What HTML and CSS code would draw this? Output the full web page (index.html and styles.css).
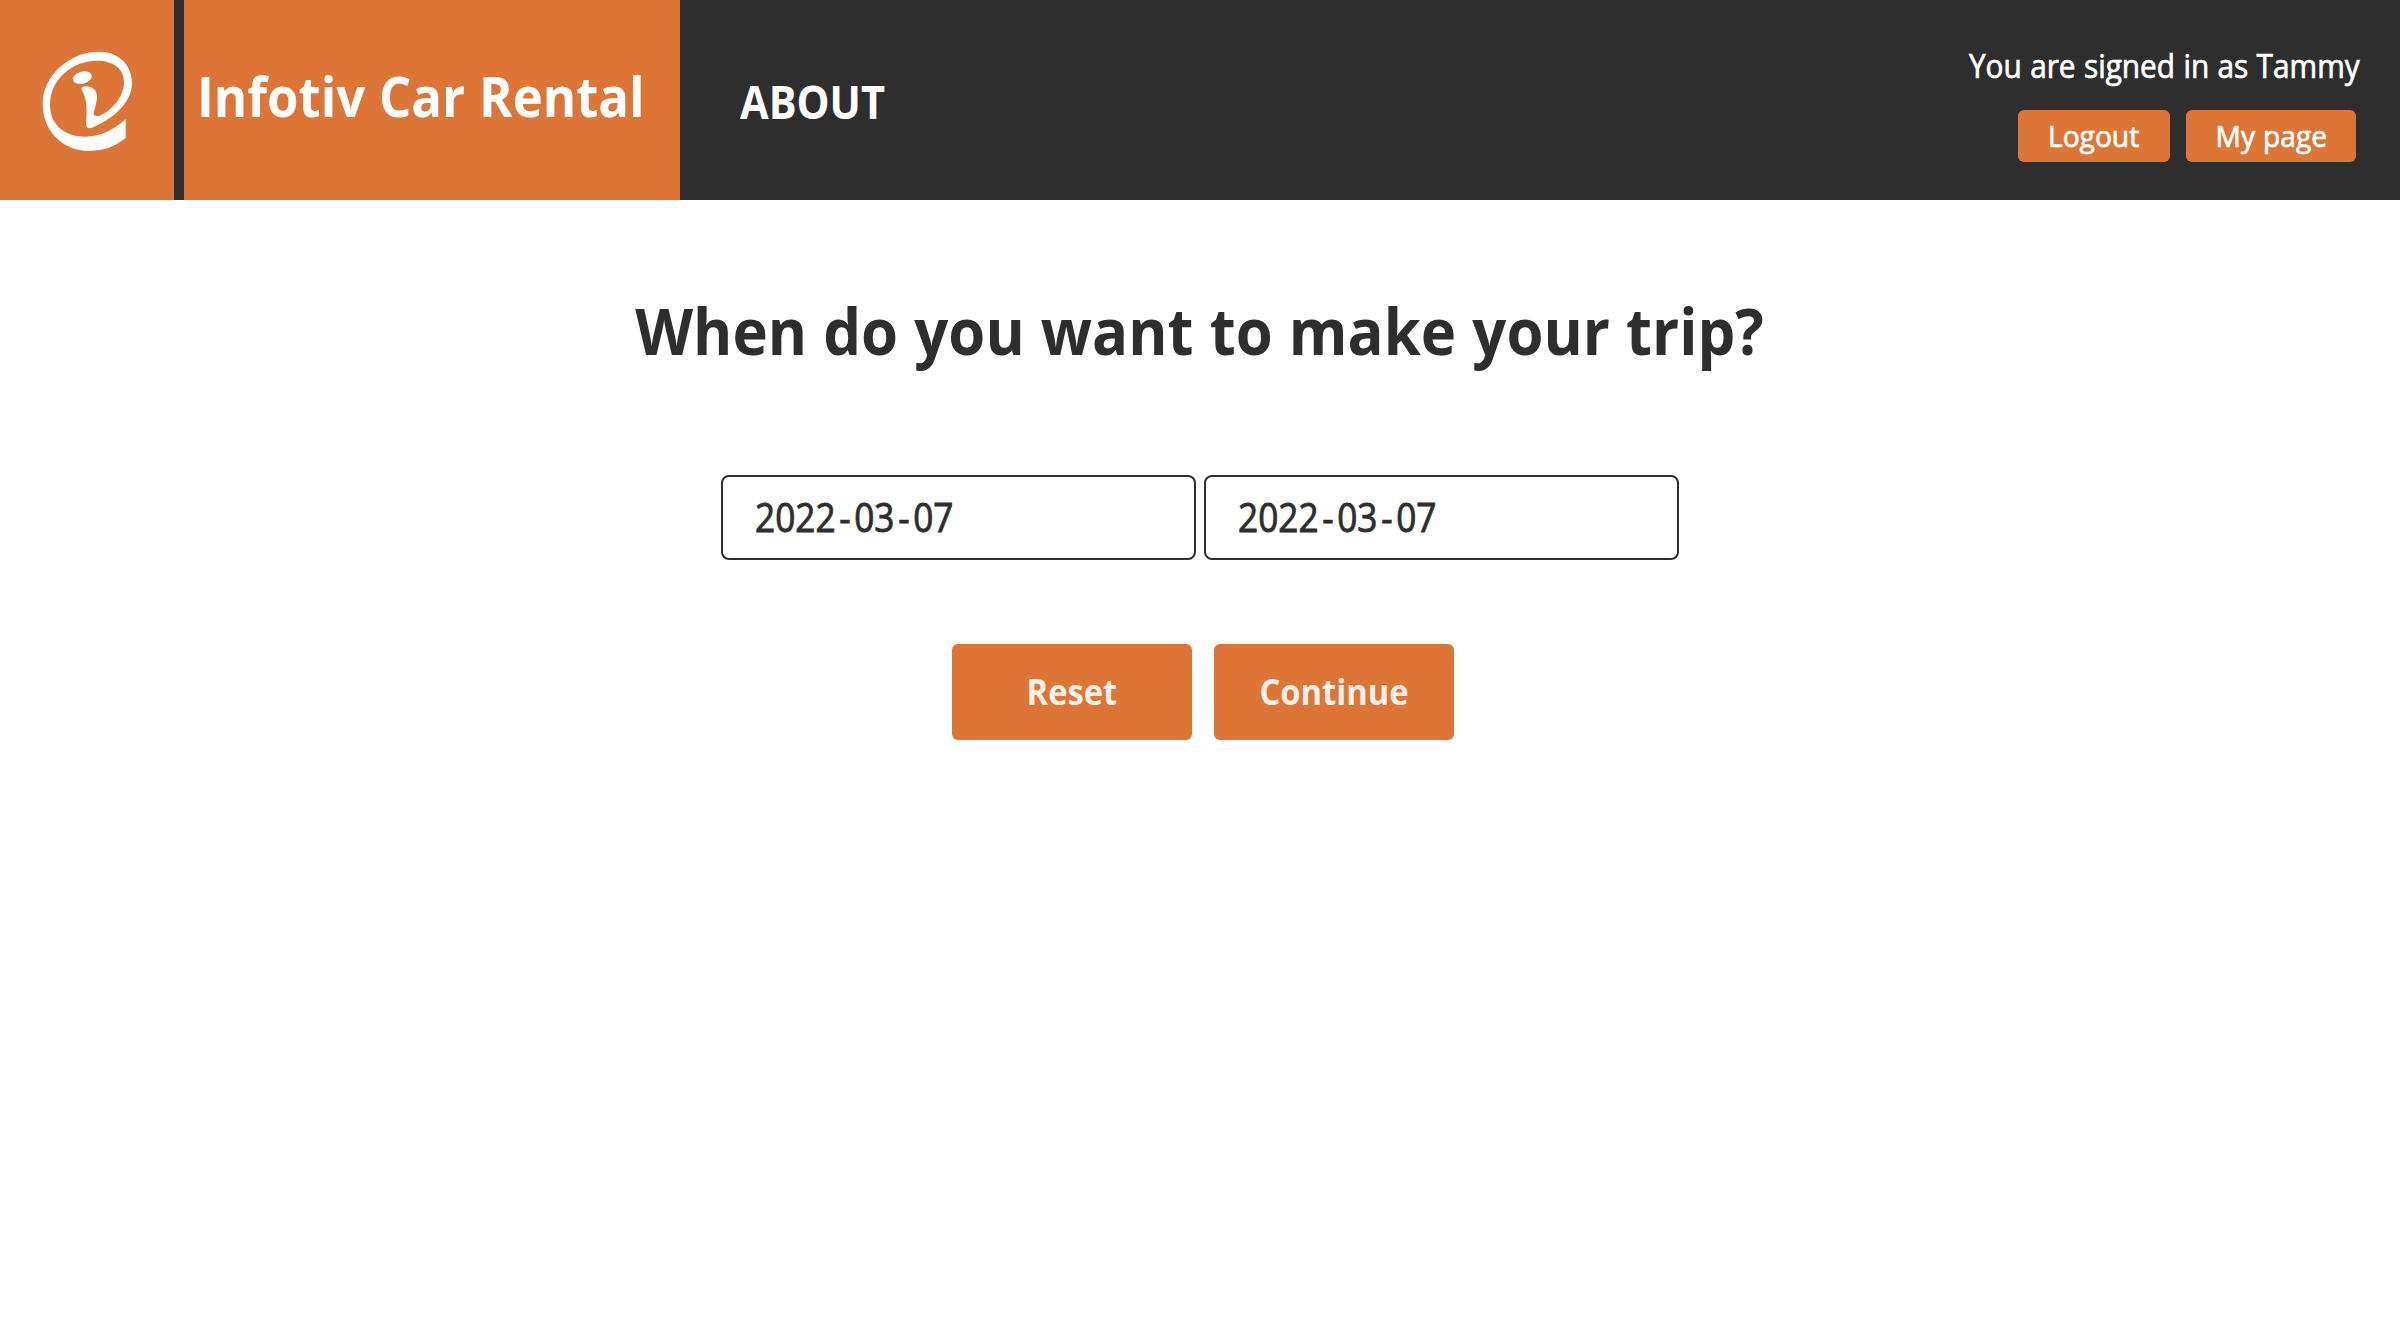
FILE: index.html
```html
<!DOCTYPE html>
<html lang="en">
<head>
<meta charset="utf-8">
<title>Infotiv Car Rental</title>
<link rel="stylesheet" href="styles.css">
</head>
<body>
<header class="header">
  <a class="logo" aria-label="Infotiv">
    <svg class="logo-mark" viewBox="0 0 522 600" fill="#fff">
      <path d="M377 357V414Q330 453 268 453C185 453 128 390 128 312C128 225 210 155 297 155C357 155 396 195 396 250C396 310 335 360 274 384C263 386 258 382 258 372C262 330 260 290 245 270Q243 259 256 259C280 259 291 272 291 292C289 315 282 330 281 345Q290 350 300 347C335 330 372 290 372 248C372 205 340 182 290 182C215 182 150 240 150 315C150 375 195 410 255 410C300 410 340 390 377 357Z"/>
      <ellipse cx="247" cy="233" rx="29" ry="18" transform="rotate(-15 247 233)"/>
    </svg>
  </a>
  <h1 class="title"><span class="label">Infotiv Car Rental</span></h1>
  <nav class="nav"><a class="about"><span class="label">ABOUT</span></a></nav>
  <div class="account">
    <p class="welcome"><span class="label">You are signed in as Tammy</span></p>
    <div class="account-actions">
      <button class="small-button logout"><span class="label">Logout</span></button>
      <button class="small-button my-page"><span class="label">My page</span></button>
    </div>
  </div>
</header>
<main class="main">
  <h2 class="question"><span class="label">When do you want to make your trip?</span></h2>
  <div class="dates">
    <div class="date"><span class="label">2022<i class="dash">-</i>03<i class="dash">-</i>07</span></div>
    <div class="date"><span class="label">2022<i class="dash">-</i>03<i class="dash">-</i>07</span></div>
  </div>
  <div class="actions">
    <button class="button reset"><span class="label">Reset</span></button>
    <button class="button continue"><span class="label">Continue</span></button>
  </div>
</main>
</body>
</html>
```
FILE: styles.css
```css
* { box-sizing: border-box; }
body { margin: 0; background: #fff; color: #2e2e2e; font-family: "Trebuchet MS", "Open Sans", sans-serif; word-spacing: 0.04em; }
h1, h2, p { margin: 0; }
button { border: 0; padding: 0; font: inherit; word-spacing: inherit; background: #dc7535; }

.label { display: inline-block; transform: scaleX(var(--condense, 0.909)); transform-origin: var(--origin, center); }

.header { display: flex; height: 200px; background: #2e2e2e; color: #fff; }
.logo { width: 174px; margin-right: 10px; background: #dc7535; }
.logo-mark { display: block; width: 174px; height: 200px; }
.title { --origin: left; width: 496px; padding: 57px 0 0 13px; background: #dc7535; font-size: 56px; line-height: 76px; font-weight: 700; white-space: nowrap; }
.nav { padding: 69px 0 0 60px; }
.about { --origin: left; --condense: 0.902; font-size: 46px; line-height: 64px; font-weight: 700; }
.account { display: flex; flex-direction: column; align-items: flex-end; margin-left: auto; padding: 44px 40px 0 0; }
.welcome { --origin: right; --condense: 0.931; font-size: 32px; line-height: 44px; height: 66px; -webkit-text-stroke: 0.7px; }
.account-actions { display: flex; gap: 16px; padding-right: 4px; }
.small-button { --condense: 0.94; height: 52px; border-radius: 6px; color: #fff; font-size: 30px; line-height: 52px; -webkit-text-stroke: 0.7px; }
.logout { width: 152px; }
.my-page { width: 170px; }
.question { --condense: 0.935; margin-top: 87px; text-align: center; font-size: 64px; line-height: 88px; font-weight: 700; }
.dates { display: flex; justify-content: center; gap: 8px; margin-top: 100px; }
.date { --origin: left; --condense: 0.88; width: 475px; height: 85px; border: 2px solid #2e2e2e; border-radius: 8px; padding-left: 32px; font-size: 40px; line-height: 79px; -webkit-text-stroke: 0.9px; }
.dash { margin: 0 4.2px; font-style: normal; }
.actions { display: flex; justify-content: center; gap: 22px; margin-top: 84px; padding-left: 6px; }
.button { width: 240px; height: 96px; padding-bottom: 2px; border-radius: 6px; color: #fff0ea; font-size: 36px; font-weight: 700; }
```
